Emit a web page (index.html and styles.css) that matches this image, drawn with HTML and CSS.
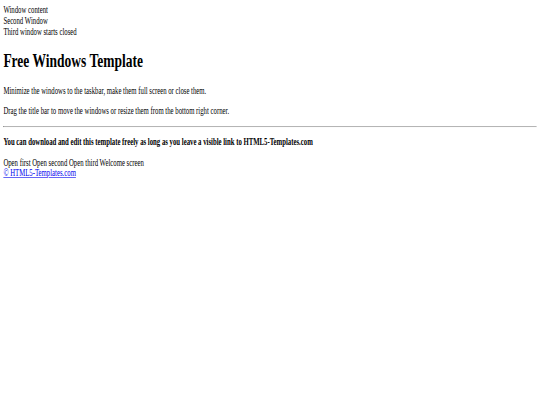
FILE: index.html
```html
<!DOCTYPE html>
<html>
<head>
<meta charset="utf-8">
<title>Free Windows Template</title>
<link rel="stylesheet" href="styles.css">
</head>
<body>
<div class="viewport">
<div class="page">
  <div class="window">Window content</div>
  <div class="window">Second Window</div>
  <div class="window">Third window starts closed</div>
  <h1>Free Windows Template</h1>
  <p>Minimize the windows to the taskbar, make them full screen or close them.</p>
  <p>Drag the title bar to move the windows or resize them from the bottom right corner.</p>
  <hr>
  <p><strong>You can download and edit this template freely as long as you leave a visible link to HTML5-Templates.com</strong></p>
  <div class="taskbar"><span>Open first</span> <span>Open second</span> <span>Open third</span> <span>Welcome screen</span></div>
  <div class="footer"><a href="#">© HTML5-Templates.com</a></div>
</div>
</div>
</body>
</html>
```
FILE: styles.css
```css
html, body {
  margin: 0;
  padding: 0;
  background: #fff;
  overflow: hidden;
}
.viewport {
  width: 540px;
  height: 405px;
  overflow: hidden;
}
.page {
  width: 1264px;
  padding: 8px;
  font-family: "Liberation Serif", "Times New Roman", serif;
  font-size: 16px;
  color: #000;
  transform: scale(0.421875, 0.6);
  transform-origin: 0 0;
}
h1 {
  font-size: 32px;
  margin: 21.44px 0;
}
p {
  margin: 16px 0;
}
hr {
  margin: 8px 0;
  border: 1px inset #999;
  border-bottom-color: #eee;
  border-right-color: #eee;
}
a {
  color: #0000ee;
}
```
